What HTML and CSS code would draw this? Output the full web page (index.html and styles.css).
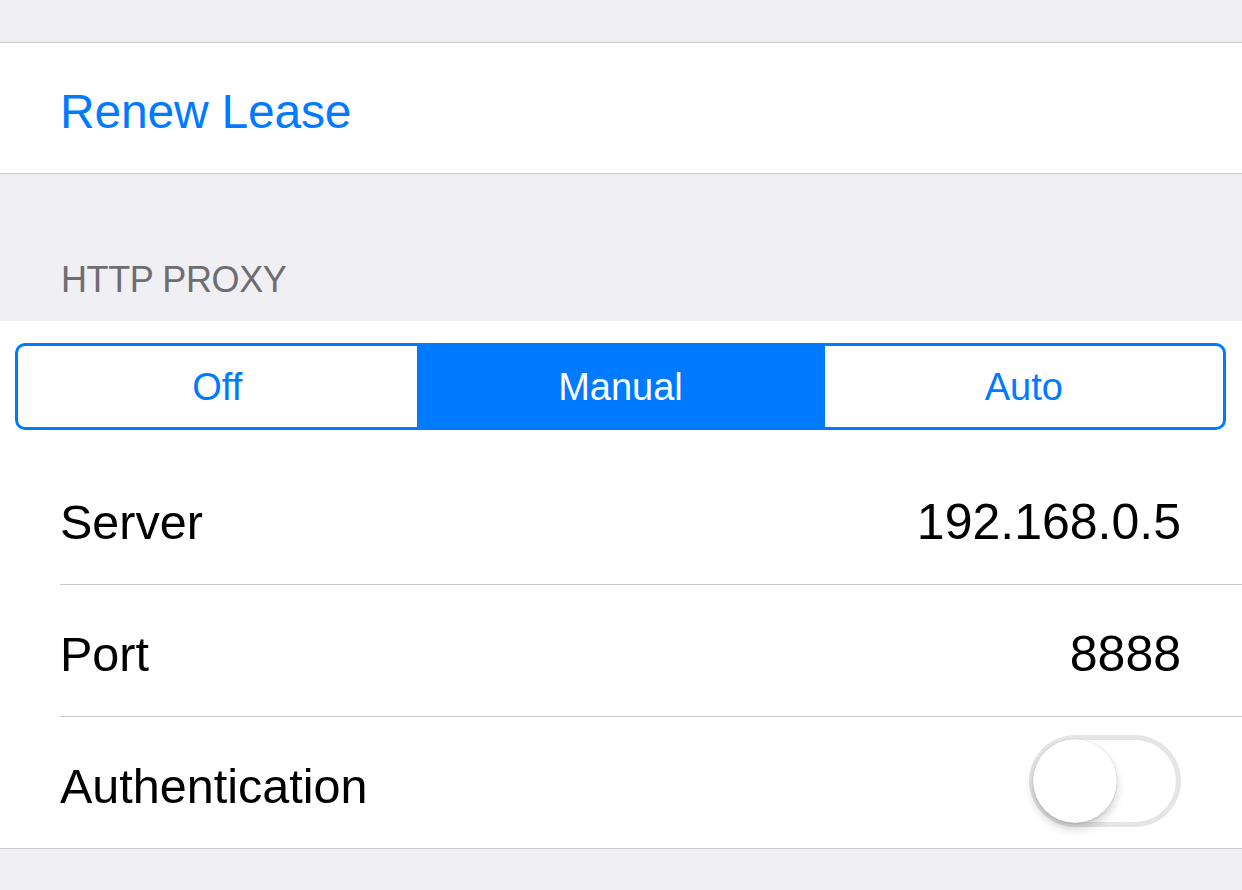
FILE: index.html
```html
<!DOCTYPE html>
<html>
<head>
<meta charset="utf-8">
<link rel="stylesheet" href="styles.css">
</head>
<body>
<div class="page">
  <div class="gap-top"></div>
  <div class="group">
    <div class="row row-single">
      <span class="link">Renew Lease</span>
    </div>
  </div>
  <div class="section-header">HTTP PROXY</div>
  <div class="group group-proxy">
    <div class="seg-cell">
      <div class="segmented">
        <div class="seg">Off</div>
        <div class="seg seg-active">Manual</div>
        <div class="seg">Auto</div>
      </div>
    </div>
    <div class="row row-first">
      <div class="row-inner">
        <span class="label">Server</span>
        <span class="value">192.168.0.5</span>
      </div>
    </div>
    <div class="row">
      <div class="row-inner">
        <span class="label">Port</span>
        <span class="value">8888</span>
      </div>
    </div>
    <div class="row">
      <div class="row-inner">
        <span class="label">Authentication</span>
        <div class="switch"><div class="knob"></div></div>
      </div>
    </div>
  </div>
</div>
</body>
</html>
```
FILE: styles.css
```css
html, body {
  margin: 0;
  padding: 0;
  background: #efeff4;
  font-family: "Liberation Sans", Arial, sans-serif;
}
.page {
  width: 1242px;
  height: 890px;
  overflow: hidden;
  display: flex;
  flex-direction: column;
}
.gap-top {
  height: 42px;
  flex: none;
}
.group {
  background: #ffffff;
  border-top: 1px solid #c8c7cc;
  border-bottom: 1px solid #c8c7cc;
  flex: none;
}
.group-proxy {
  border-top: none;
}
.row {
  height: 132px;
  box-sizing: border-box;
  padding-left: 60px;
  display: flex;
}
.row-first {
  height: 131px;
}
.row-single {
  height: 130px;
  align-items: center;
  padding-top: 6px;
}
.row-inner {
  flex: 1;
  display: flex;
  align-items: center;
  justify-content: space-between;
  padding-right: 61px;
  padding-top: 6px;
  border-top: 1px solid #c8c7cc;
}
.row-first .row-inner {
  border-top: none;
}
.link {
  color: #007aff;
  font-size: 48px;
  letter-spacing: -0.2px;
}
.label {
  color: #000000;
  font-size: 48.5px;
}
.value {
  color: #000000;
  font-size: 50px;
}
.section-header {
  height: 147px;
  box-sizing: border-box;
  padding-left: 61px;
  padding-bottom: 20px;
  display: flex;
  align-items: flex-end;
  color: #6d6d72;
  font-size: 36px;
  letter-spacing: -0.4px;
  flex: none;
}
.seg-cell {
  height: 132px;
  box-sizing: border-box;
  padding: 22px 16px 0 15px;
}
.segmented {
  height: 87px;
  box-sizing: border-box;
  border: 3px solid #007aff;
  border-radius: 10px;
  display: flex;
  overflow: hidden;
}
.seg {
  flex: 1;
  display: flex;
  align-items: center;
  justify-content: center;
  color: #007aff;
  font-size: 38px;
  padding-top: 2px;
}
.seg-active {
  background: #007aff;
  color: #ffffff;
  flex: 0 0 408px;
}
.switch {
  width: 152px;
  height: 92px;
  box-sizing: border-box;
  border-radius: 46px;
  background: #ffffff;
  box-shadow: inset 0 0 0 5px #e5e5e5;
  padding: 4px;
  margin-top: -9px;
  display: flex;
}
.knob {
  width: 84px;
  height: 84px;
  border-radius: 50%;
  background: #ffffff;
  box-shadow: 0 6px 10px rgba(0, 0, 0, 0.18), 0 0 1px rgba(0, 0, 0, 0.25), 0 1px 2px rgba(0, 0, 0, 0.08);
}
```
